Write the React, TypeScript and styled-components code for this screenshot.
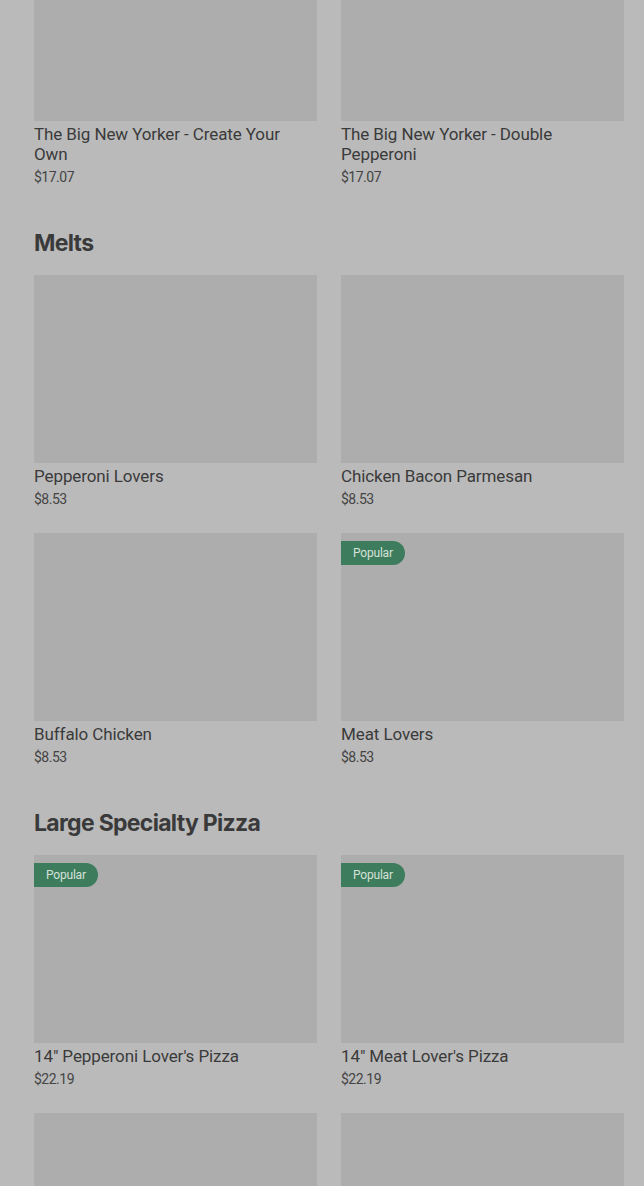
import React from "react";
import styled, { createGlobalStyle } from "styled-components";

const Global = createGlobalStyle`
  html, body { margin: 0; padding: 0; background: #bababa; overflow: hidden; }
  body { font-family: Roboto, "Liberation Sans", sans-serif; color: #3b3b3b; }
  * { box-sizing: border-box; }
`;

const Page = styled.div`
  width: 644px;
  height: 1186px;
  overflow: hidden;
  background: #bababa;
`;

const Scroller = styled.div`
  margin-top: -67px;
  padding: 0 20px 0 34px;
  display: flex;
  flex-direction: column;
  gap: 40px;
`;

const Section = styled.section`
  display: flex;
  flex-direction: column;
  gap: 16px;
`;

const Heading = styled.h2`
  margin: 0;
  font-family: Inter, Roboto, sans-serif;
  font-size: 23px;
  line-height: 32px;
  font-weight: 700;
  letter-spacing: -0.7px;
  color: #3a3a3a;
`;

const Grid = styled.div`
  display: grid;
  grid-template-columns: 283px 283px;
  column-gap: 24px;
  row-gap: 24px;
`;

const Card = styled.div`
  display: flex;
  flex-direction: column;
`;

const Thumb = styled.div`
  position: relative;
  height: 188px;
  background: #adadad;
`;

const Badge = styled.span`
  position: absolute;
  top: 8px;
  left: 0;
  height: 24px;
  padding: 0 12px;
  display: flex;
  align-items: center;
  background: #3d7c5c;
  color: #d6e2da;
  font-size: 12px;
  letter-spacing: -0.2px;
  border-radius: 0 12px 12px 0;
`;

const Title = styled.div`
  margin-top: 3px;
  font-size: 17px;
  line-height: 20px;
  letter-spacing: -0.1px;
  color: #3a3a3a;
`;

const Price = styled.div`
  margin-top: 3px;
  font-size: 14px;
  line-height: 20px;
  color: #444;
  letter-spacing: -0.5px;
`;

type Item = { name: string; price: string; popular?: boolean };

const sections: { title?: string; items: Item[] }[] = [
  {
    items: [
      { name: "The Big New Yorker - Create Your Own", price: "$17.07" },
      { name: "The Big New Yorker - Double Pepperoni", price: "$17.07" },
    ],
  },
  {
    title: "Melts",
    items: [
      { name: "Pepperoni Lovers", price: "$8.53" },
      { name: "Chicken Bacon Parmesan", price: "$8.53" },
      { name: "Buffalo Chicken", price: "$8.53" },
      { name: "Meat Lovers", price: "$8.53", popular: true },
    ],
  },
  {
    title: "Large Specialty Pizza",
    items: [
      { name: "14\" Pepperoni Lover's Pizza", price: "$22.19", popular: true },
      { name: "14\" Meat Lover's Pizza", price: "$22.19", popular: true },
      { name: "", price: "" },
      { name: "", price: "" },
    ],
  },
];

export default function App() {
  return (
    <Page>
      <Global />
      <Scroller>
        {sections.map((s, i) => (
          <Section key={i}>
            {s.title && <Heading>{s.title}</Heading>}
            <Grid>
              {s.items.map((it, j) => (
                <Card key={j}>
                  <Thumb>{it.popular && <Badge>Popular</Badge>}</Thumb>
                  {it.name && <Title>{it.name}</Title>}
                  {it.price && <Price>{it.price}</Price>}
                </Card>
              ))}
            </Grid>
          </Section>
        ))}
      </Scroller>
    </Page>
  );
}
